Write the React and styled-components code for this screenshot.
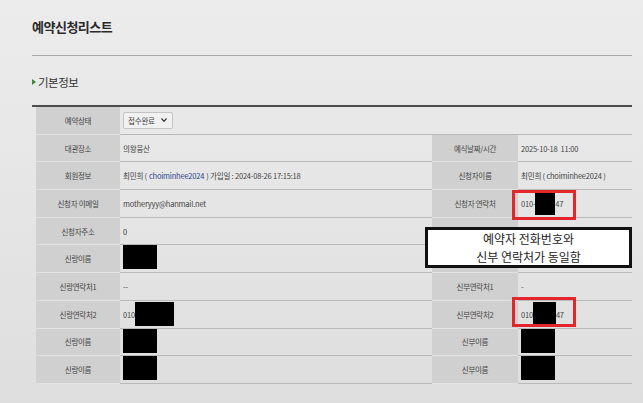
import styled, { createGlobalStyle } from "styled-components"

const Global = createGlobalStyle`
    html, body {
        margin: 0;
        padding: 0;
        background: #e4e4e4;
    }
    body {
        font-family: "Noto Sans CJK KR", "Noto Sans", "Liberation Sans", sans-serif;
        color: #333;
    }
`

const Page = styled.div`
    width: 643px;
    height: 403px;
    box-sizing: border-box;
    padding: 18px 11px 0 32px;
    overflow: hidden;
    background: linear-gradient(180deg, #ececec 0%, #e6e6e6 45%, #dedede 100%);
`

const Title = styled.h1`
    margin: 0;
    font-size: 13px;
    line-height: 18px;
    font-weight: 700;
    color: #2a2a2a;
    letter-spacing: -0.5px;
`

const Rule = styled.div`
    margin-top: 19px;
    height: 1px;
    background: #a9a9a9;
`

const SectionHead = styled.div`
    display: flex;
    align-items: center;
    gap: 2px;
    margin-top: 18px;
    height: 16px;
    font-size: 11.5px;
    color: #333;
    letter-spacing: -0.5px;
`

const Arrow = styled.span`
    width: 0;
    height: 0;
    border-top: 3px solid transparent;
    border-bottom: 3px solid transparent;
    border-left: 4px solid #3c8a3c;
`

const ThickRule = styled.div`
    margin-top: 15px;
    height: 2px;
    background: #4d4d4d;
`

const Table = styled.div`
    position: relative;
    margin-left: 4px;
    display: grid;
    grid-template-columns: 84px 312px 86px 114px;
    grid-auto-rows: 27.7px;
`

const Label = styled.div`
    display: flex;
    align-items: center;
    justify-content: center;
    box-sizing: border-box;
    background: ${(p) => (p.$blank ? "transparent" : "#d0d0d0")};
    border-bottom: 1px solid ${(p) => (p.$blank ? "#b9b9b9" : "#e2e2e2")};
    font-size: 7.5px;
    color: #444;
    letter-spacing: -0.3px;
`

const Value = styled.div`
    display: flex;
    align-items: center;
    box-sizing: border-box;
    padding-left: 3px;
    border-bottom: 1px solid #b9b9b9;
    font-size: 7.5px;
    color: #444;
    letter-spacing: -0.2px;
    white-space: nowrap;
`

const Select = styled.div`
    display: flex;
    align-items: center;
    justify-content: space-between;
    width: 50px;
    height: 17px;
    box-sizing: border-box;
    padding: 0 5px 0 4px;
    background: #f1f1f1;
    border: 1px solid #c4c4c4;
    border-radius: 2px;
    font-size: 7.5px;
`

const Link = styled.span`
    color: #2c3f8c;
    margin: 0 2px;
`

const Redact = styled.span`
    display: inline-block;
    width: ${(p) => p.$w}px;
    height: 24px;
    background: #000;
    align-self: ${(p) => (p.$top ? "flex-start" : "center")};
`

const Callout = styled.div`
    position: absolute;
    left: 389px;
    top: 120px;
    width: 207px;
    height: 41px;
    box-sizing: border-box;
    background: #fff;
    border: 3px solid #111;
    display: flex;
    flex-direction: column;
    align-items: center;
    justify-content: center;
    font-size: 12px;
    line-height: 17.5px;
    color: #222;
`

const CalloutLine = styled.div`
    height: 17.5px;
    overflow: visible;
`

const Mark = styled.div`
    position: absolute;
    left: 476px;
    width: 64px;
    height: 30px;
    box-sizing: border-box;
    border: 3px solid #e3262b;
`

function App() {
    return (
        <>
            <Global />
            <Page>
                <Title>예약신청리스트</Title>
                <Rule />
                <SectionHead>
                    <Arrow />
                    기본정보
                </SectionHead>
                <ThickRule />
                <Table>
                    <Label>예약상태</Label>
                    <Value>
                        <Select>
                            접수완료
                            <svg width="6" height="4" viewBox="0 0 6 4">
                                <path d="M0.5 0.5 L3 3.3 L5.5 0.5" fill="none" stroke="#333" strokeWidth="1.2" />
                            </svg>
                        </Select>
                    </Value>
                    <Label $blank />
                    <Value />

                    <Label>대관장소</Label>
                    <Value>의왕웅산</Value>
                    <Label>예식날짜/시간</Label>
                    <Value>2025-10-18&nbsp;&nbsp;11:00</Value>

                    <Label>회원정보</Label>
                    <Value>
                        최민희 (<Link>choiminhee2024</Link>) 가입일 : 2024-08-26 17:15:18
                    </Value>
                    <Label>신청자이름</Label>
                    <Value>최민희 ( choiminhee2024 )</Value>

                    <Label>신청자 이메일</Label>
                    <Value>motheryyy@hanmail.net</Value>
                    <Label>신청자 연락처</Label>
                    <Value>
                        010-<Redact $w={20} />47
                    </Value>

                    <Label>신청자주소</Label>
                    <Value>0</Value>
                    <Label />
                    <Value />

                    <Label>신랑이름</Label>
                    <Value>
                        <Redact $w={34} $top />
                    </Value>
                    <Label />
                    <Value />

                    <Label>신랑연락처1</Label>
                    <Value>--</Value>
                    <Label>신부연락처1</Label>
                    <Value>-</Value>

                    <Label>신랑연락처2</Label>
                    <Value>
                        010<Redact $w={39} />
                    </Value>
                    <Label>신부연락처2</Label>
                    <Value>
                        010<Redact $w={23} />47
                    </Value>

                    <Label>신랑이름</Label>
                    <Value>
                        <Redact $w={34} $top />
                    </Value>
                    <Label>신부이름</Label>
                    <Value>
                        <Redact $w={34} $top />
                    </Value>

                    <Label>신랑이름</Label>
                    <Value>
                        <Redact $w={34} $top />
                    </Value>
                    <Label>신부이름</Label>
                    <Value>
                        <Redact $w={34} $top />
                    </Value>

                    <Mark style={{ top: 83 }} />
                    <Mark style={{ top: 190 }} />
                    <Callout>
                        <CalloutLine>예약자 전화번호와</CalloutLine>
                        <CalloutLine>신부 연락처가 동일함</CalloutLine>
                    </Callout>
                </Table>
            </Page>
        </>
    )
}

export default App
